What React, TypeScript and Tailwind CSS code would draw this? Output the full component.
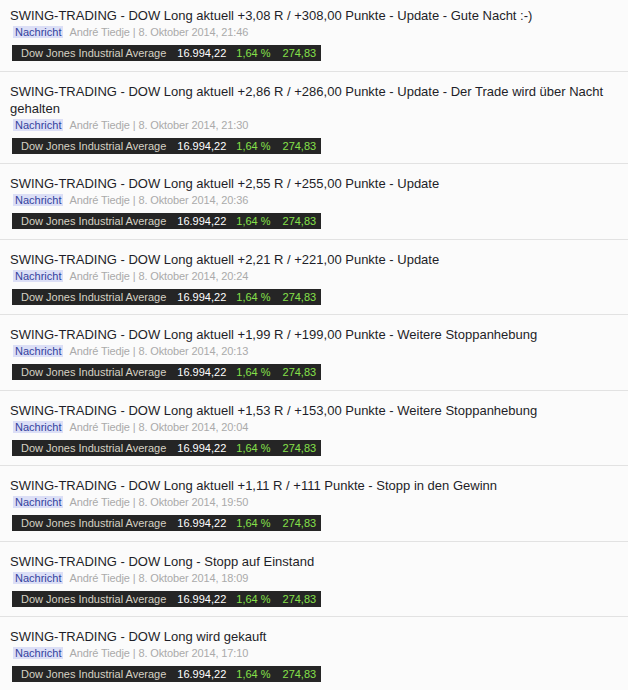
const posts = [
  { title: 'SWING-TRADING - DOW Long aktuell +3,08 R / +308,00 Punkte - Update - Gute Nacht :-)', time: '21:46' },
  { title: 'SWING-TRADING - DOW Long aktuell +2,86 R / +286,00 Punkte - Update - Der Trade wird über Nacht gehalten', time: '21:30' },
  { title: 'SWING-TRADING - DOW Long aktuell +2,55 R / +255,00 Punkte - Update', time: '20:36' },
  { title: 'SWING-TRADING - DOW Long aktuell +2,21 R / +221,00 Punkte - Update', time: '20:24' },
  { title: 'SWING-TRADING - DOW Long aktuell +1,99 R / +199,00 Punkte - Weitere Stoppanhebung', time: '20:13' },
  { title: 'SWING-TRADING - DOW Long aktuell +1,53 R / +153,00 Punkte - Weitere Stoppanhebung', time: '20:04' },
  { title: 'SWING-TRADING - DOW Long aktuell +1,11 R / +111 Punkte - Stopp in den Gewinn', time: '19:50' },
  { title: 'SWING-TRADING - DOW Long - Stopp auf Einstand', time: '18:09' },
  { title: 'SWING-TRADING - DOW Long wird gekauft', time: '17:10' },
];

function Ticker() {
  return (
    <div className="inline-flex h-[16px] items-center bg-[#252525] pl-[9px] pr-[5px] text-[11px] leading-[16px] whitespace-nowrap">
      <span className="text-[#d6d2c4]">Dow Jones Industrial Average</span>
      <span className="ml-[11px] text-white">16.994,22</span>
      <span className="ml-[10px] text-[#86e04a]">1,64 %</span>
      <span className="ml-[12px] text-[#86e04a]">274,83</span>
    </div>
  );
}

export default function App() {
  return (
    <div className="min-h-screen bg-[#fbfbfb] font-['Liberation_Sans',Arial,sans-serif]">
      {posts.map((p, i) => (
        <div
          key={i}
          className="border-b border-[#e2e2e2] pl-[10px] pr-[10px] pt-[11px] pb-[9.5px] first:pt-[7px]"
        >
          {/* Title */}
          <div className="text-[13px] leading-[17px] text-[#1e1e28]">{p.title}</div>

          {/* Meta */}
          <div className="mt-[2px] flex h-[12px] items-center text-[11px] leading-[12px]">
            <span className="ml-[3px] bg-[#dcdff6] px-[2px] text-[#34429e]">Nachricht</span>
            <span className="ml-[6px] tracking-[-0.12px] text-[#aaa]">André Tiedje | 8. Oktober 2014, {p.time}</span>
          </div>

          {/* Index */}
          <div className="ml-[2px] mt-[7px] flex">
            <Ticker />
          </div>
        </div>
      ))}
    </div>
  );
}
